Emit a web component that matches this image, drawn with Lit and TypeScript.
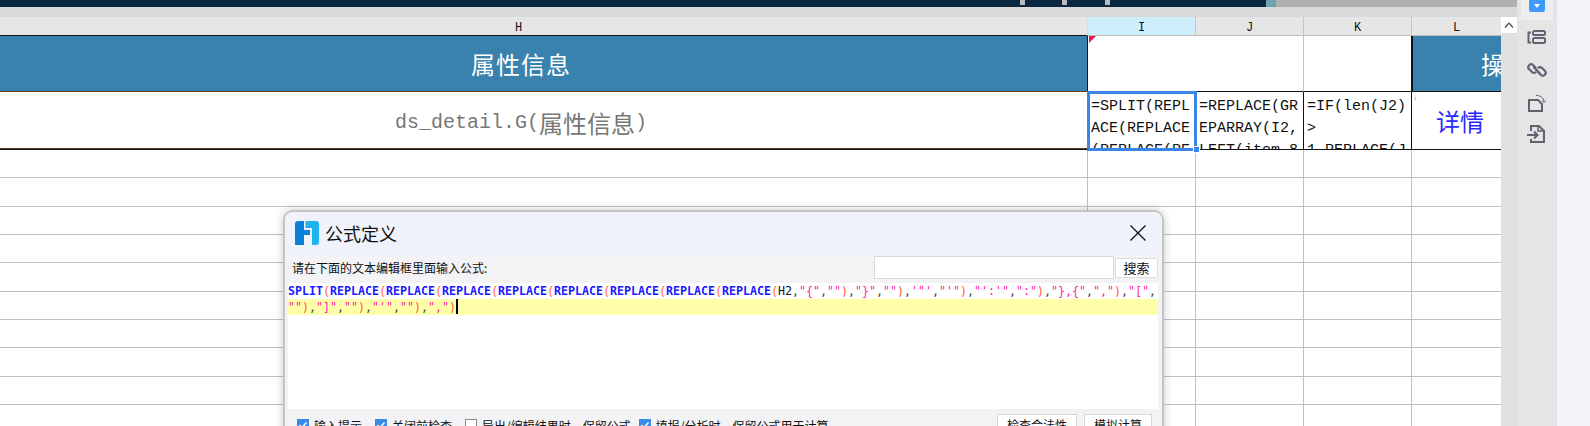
import { LitElement, html, css } from "lit";
import { customElement } from "lit/decorators.js";

type Tok = [string, string];
const rep: Tok[] = Array.from({ length: 8 }, () => [["fn", "REPLACE"], ["pn", "("]] as Tok[]).flat();
const line1: Tok[] = [
  ["fn", "SPLIT"], ["pn", "("], ...rep,
  ["id", "H2"], ["cm", ","], ["st", '"{"'], ["cm", ","], ["st", '""'], ["pn", ")"], ["cm", ","],
  ["st", '"}"'], ["cm", ","], ["st", '""'], ["pn", ")"], ["cm", ","],
  ["st", `'"'`], ["cm", ","], ["st", `"'"`], ["pn", ")"], ["cm", ","],
  ["st", `"':'"`], ["cm", ","], ["st", '":"'], ["pn", ")"], ["cm", ","],
  ["st", '"},{"'], ["cm", ","], ["st", '","'], ["pn", ")"], ["cm", ","],
  ["st", '"["'], ["cm", ","],
];
const line2: Tok[] = [
  ["st", '""'], ["pn", ")"], ["cm", ","], ["st", '"]"'], ["cm", ","], ["st", '""'], ["pn", ")"], ["cm", ","],
  ["st", `"'"`], ["cm", ","], ["st", '""'], ["pn", ")"], ["cm", ","], ["st", '","'], ["pn", ")"],
];
const checks: [string, boolean][] = [
  ["输入提示", true],
  ["关闭前检查", true],
  ["导出/编辑结果时，保留公式", false],
  ["填报/分析时，保留公式用于计算", true],
];

@customElement("app-root")
export class AppRoot extends LitElement {
  static styles = css`
    :host { display: block; width: 1590px; height: 426px; overflow: hidden; position: relative; background: #f4f4f8;
      font-family: "Liberation Sans", "Noto Sans CJK SC", sans-serif; }
    .page { display: flex; height: 426px; }
    .left { width: 1517px; display: flex; flex-direction: column; flex: none; background: #fff; }
    .top { height: 7px; display: flex; flex: none; background: #0b2840; }
    .top .fill { width: 1266px; position: relative; }
    .tick { position: absolute; top: 0; width: 5px; height: 5px; background: #b9bdc2; }
    .t1 { left: 1020px; } .t2 { left: 1062px; } .t3 { left: 1105px; }
    .top .teal { width: 10px; background: #6fa3b0; }
    .top .rest { flex: 1; background: #b0b0b0; }
    .band { height: 10px; flex: none; background: #d9d9db; }
    .body { display: flex; flex: 1; min-height: 0; }
    .sheet { width: 1501px; flex: none; overflow: hidden; }
    .grid { display: grid; grid-template-columns: 1088px 108px 108px 108px 89px; grid-template-rows: 19px 56px 58px repeat(10, 28.33px); }
    .col { background: #e6e6e6; font: 12px "Liberation Mono", monospace; color: #111; display: flex; align-items: center; justify-content: center;
      border-right: 1px solid #c4c4c4; border-bottom: 1px solid #bbb; box-sizing: border-box; padding-top: 3px; }
    .col.h { border-bottom-color: #111; padding-right: 50px; border-right-color: #ddd; }
    .col.sel { background: #cdeefa; }
    .col.l { border-right: 0; }
    .hd { background: #3a82ae; color: #fff; font: 24px "Noto Sans CJK SC", sans-serif; letter-spacing: 1px; display: flex; align-items: center; justify-content: center;
      box-sizing: border-box; border-bottom: 1px solid #6a3a12; white-space: nowrap; overflow: hidden; padding-right: 46px; }
    .hd.op { padding: 0 0 0 68px; justify-content: flex-start; border-bottom: 1px solid #111; border-left: 1px solid #111; }
    .blank { background: #fff; box-sizing: border-box; border-bottom: 1px solid #111; position: relative; }
    .blank.i { border-left: 1px solid #111; margin-left: -1px; }
    .blank.j { border-right: 1px solid #c4c4c4; }
    .blank.k { border-right: 1px solid #111; }
    .tri { position: absolute; left: 1px; top: 0; width: 0; height: 0; border-top: 7px solid #f0134d; border-right: 7px solid transparent; }
    .ds { box-sizing: border-box; border-bottom: 1px solid #111; color: #777; display: flex; align-items: center; justify-content: center;
      padding: 3px 46px 0 0; font: 20px "Liberation Mono", monospace; white-space: nowrap; overflow: hidden; box-shadow: inset 0 -1px 0 #6a3a12; }
    .ds span { font: 24px "Noto Sans CJK SC", sans-serif; }
    .f { box-sizing: border-box; font: 15px/22px "Liberation Mono", "Noto Sans CJK SC", monospace; color: #111; word-break: break-all; overflow: hidden;
      padding: 0 2px 0 3px; border-right: 1px solid #111; border-bottom: 1px solid #111; position: relative; }
    .f.i { outline: 3px solid #3a86e8; outline-offset: -2px; z-index: 1; overflow: visible; border: 0; padding-top: 4px; }
    .f .clip { height: 52px; overflow: hidden; }
    .f.plain { padding-top: 4px; }
    .handle { position: absolute; right: -4px; bottom: -3px; width: 5px; height: 5px; background: #3a86e8; border: 1px solid #fff; }
    .detail { box-sizing: border-box; border-bottom: 1px solid #111; color: #2a2aff; font: 24px "Noto Sans CJK SC", sans-serif; position: relative;
      padding-left: 24px; display: flex; align-items: center; }
    .arrow { position: absolute; left: 1px; top: 1px; color: #888; font: 8px "Liberation Sans", sans-serif; }
    .c { box-sizing: border-box; border-bottom: 1px solid #bfbfbf; }
    .c.v { border-right: 1px solid #bfbfbf; }
    .scroll { width: 16px; flex: none; background: #e0e0e0; }
    .scroll .up { height: 16px; background: #fff; display: flex; align-items: center; justify-content: center; }
    .panel { width: 40px; flex: none; background: #e5e5e5; display: flex; flex-direction: column; align-items: center; }
    .hl { width: 32px; height: 20px; background: #eeeeee; display: flex; justify-content: center; flex: none; }
    .blue { width: 16px; height: 12px; background: #3f9bfa; border-radius: 0 0 2px 2px; display: flex; align-items: center; justify-content: center; }
    .icons { display: flex; flex-direction: column; gap: 12px; margin-top: 8px; }
    .icons svg { display: block; }
    .dialog { position: absolute; left: 283px; top: 210px; width: 881px; height: 300px; box-sizing: border-box; background: #f3f3f5; border: 2px solid #c4c4c4; border-radius: 10px;
      box-shadow: 0 0 10px rgba(0,0,0,.22); overflow: hidden; display: flex; flex-direction: column; }
    .title { height: 42px; flex: none; background: #eff2fa; display: flex; align-items: center; padding: 0 16px 0 10px; gap: 6px; font: 18px "Noto Sans CJK SC", sans-serif; color: #111; }
    .title .name { flex: 1; }
    .search { height: 29px; box-sizing: border-box; padding: 0 4px 2px 7px; display: flex; align-items: center; flex: none; font: 12px "Noto Sans CJK SC", sans-serif; color: #111; }
    .search .lbl { flex: 1; }
    .search .in { width: 240px; height: 23px; box-sizing: border-box; background: #fff; border: 1px solid #d8d8d8; }
    .search .btn { width: 43px; height: 20px; box-sizing: border-box; margin-left: 1px; background: #fff; border: 1px solid #ddd; display: flex; align-items: center; justify-content: center; font-size: 13px; }
    .editor { margin: 0 4px 0 3px; height: 126px; flex: none; background: #fff; font: bold 11.63px/16px "DejaVu Sans Mono", monospace; }
    .ln { height: 16px; white-space: pre; }
    .ln.cur { background: #ffffaa; display: flex; }
    .caret { width: 2px; height: 15px; background: #000; }
    .fn { color: #1a1aff; }
    .pn { color: #ff5a3c; font-weight: normal; }
    .st { color: #ff1aa8; font-weight: normal; }
    .cm { color: #444; font-weight: normal; }
    .id { color: #111; font-weight: normal; }
    .foot { display: flex; align-items: flex-start; padding: 10px 10px 0 12px; font: 12px "Noto Sans CJK SC", sans-serif; color: #111; }
    .ck { display: flex; gap: 5px; margin-right: 13px; white-space: nowrap; align-items: flex-start; line-height: 14px; }
    .ck:nth-child(3) { margin-right: 8px; }
    .box { width: 12px; height: 12px; background: #3a8be8; flex: none; display: block; }
    .box.off { box-sizing: border-box; background: #fff; border: 1px solid #888; }
    .sp { flex: 1; }
    .fb { height: 20px; background: #fff; border: 1px solid #d6d6d6; display: flex; align-items: center; justify-content: center; box-sizing: border-box; margin-top: -5px; margin-left: 7px; }
    .fb.a { width: 80px; } .fb.b { width: 68px; }
  `;

  private toks(list: Tok[]) {
    return list.map(([c, t]) => html`<span class=${c}>${t}</span>`);
  }

  render() {
    const rows = Array.from({ length: 10 });
    return html`
      <div class="page">
        <div class="left">
          <div class="top"><div class="fill"><i class="tick t1"></i><i class="tick t2"></i><i class="tick t3"></i></div><div class="teal"></div><div class="rest"></div></div>
          <div class="band"></div>
          <div class="body">
            <div class="sheet">
              <div class="grid">
                <div class="col h">H</div><div class="col sel">I</div><div class="col">J</div><div class="col">K</div><div class="col l">L</div>
                <div class="hd">属性信息</div>
                <div class="blank i"><i class="tri"></i></div><div class="blank j"></div><div class="blank k"></div>
                <div class="hd op">操作</div>
                <div class="ds">ds_detail.G(<span>属性信息</span>)</div>
                <div class="f i"><div class="clip">=SPLIT(REPLACE(REPLACE(REPLACE(REPLACE(REPLACE</div><i class="handle"></i></div>
                <div class="f plain">=REPLACE(GREPARRAY(I2,LEFT(item,8</div>
                <div class="f plain">=IF(len(J2)<br />&gt;<br />1,REPLACE(J</div>
                <div class="detail"><i class="arrow">↓</i>详情</div>
                ${rows.map(() => html`<div class="c v"></div><div class="c v"></div><div class="c v"></div><div class="c v"></div><div class="c"></div>`)}
              </div>
            </div>
            <div class="scroll">
              <div class="up"><svg width="10" height="6" viewBox="0 0 10 6"><path d="M1 5.500 5 1.200 9 5.500" fill="none" stroke="#444" stroke-width="1.200"/></svg></div>
            </div>
          </div>
        </div>
        <div class="panel">
          <div class="hl"><div class="blue"><svg width="6" height="4" viewBox="0 0 6 4"><path d="M0 0H6L3 4Z" fill="#fff"/></svg></div></div>
          <div class="icons">
            <svg width="20" height="20" viewBox="0 0 20 20" fill="none" stroke="#5f6370" stroke-width="2">
              <path d="M4 4.500H1.500V14.500H4"/><rect x="6" y="3" width="12" height="4" rx="1.500"/><rect x="6" y="10" width="12" height="5" rx="1.500"/>
            </svg>
            <svg width="20" height="20" viewBox="0 0 20 20" fill="none" stroke="#5f6370" stroke-width="2.200" stroke-linecap="round">
              <path d="M8.500 7.500 6.200 5.200a2.800 2.800 0 0 0-4 4L5 12a2.800 2.800 0 0 0 3.600.4"/><path d="M11.500 12.500l2.300 2.300a2.800 2.800 0 0 0 4-4L15 8a2.800 2.800 0 0 0-3.600-.4"/><path d="M7 7.500 12.500 13"/>
            </svg>
            <svg width="20" height="20" viewBox="0 0 20 20" fill="none" stroke="#5f6370">
              <path d="M2 8H11L15 12V19H2Z" stroke-width="2"/><path d="M9 3.500C13 3 16.500 6 17 9.500" stroke-width="1"/><path d="M15.500 8.500 17 10.500 18.500 8.500" stroke-width="1"/>
            </svg>
            <svg width="20" height="20" viewBox="0 0 20 20" fill="none" stroke="#5f6370" stroke-width="2">
              <path d="M4 7V2H12L17 7V18H4V15"/><path d="M11 2V7H17" stroke-width="1.500"/><path d="M0 11H10M7 7.500 10.500 11 7 14.500"/>
            </svg>
          </div>
        </div>
      </div>
      <div class="dialog">
        <div class="title">
          <svg width="24" height="24" viewBox="0 0 24 24">
            <path d="M3 0H9V9H15V14H9V24H0V3A3 3 0 0 1 3 0Z" fill="#0a80d8"/>
            <path d="M10.500 0H21A3 3 0 0 1 24 3V21A3 3 0 0 1 21 24H17V7H10.500Z" fill="#1fb4ee"/>
          </svg>
          <div class="name">公式定义</div>
          <svg width="16" height="16" viewBox="0 0 16 16"><path d="M.5.5 15.500 15.500M15.500.5.5 15.500" stroke="#111" stroke-width="1.300" fill="none"/></svg>
        </div>
        <div class="search">
          <div class="lbl">请在下面的文本编辑框里面输入公式:</div>
          <div class="in"></div>
          <div class="btn">搜索</div>
        </div>
        <div class="editor">
          <div class="ln">${this.toks(line1)}</div>
          <div class="ln cur"><span>${this.toks(line2)}</span><i class="caret"></i></div>
        </div>
        <div class="foot">
          ${checks.map(([label, on]) => html`
            <div class="ck">
              ${on
                ? html`<svg class="box" viewBox="0 0 12 12"><path d="M2.500 6 5 8.500 9.500 3.500" fill="none" stroke="#fff" stroke-width="1.500"/></svg>`
                : html`<i class="box off"></i>`}
              <span>${label}</span>
            </div>`)}
          <div class="sp"></div>
          <div class="fb a">检查合法性</div>
          <div class="fb b">模拟计算</div>
        </div>
      </div>
    `;
  }
}
